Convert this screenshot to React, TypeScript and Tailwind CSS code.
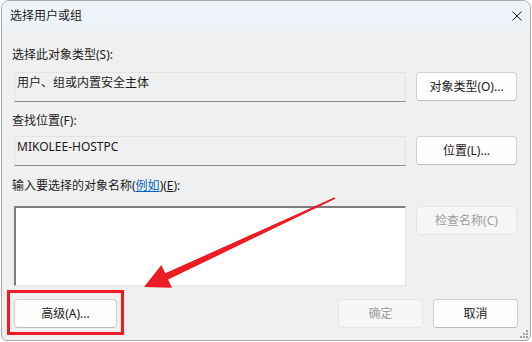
function Btn({
  label,
  disabled,
  className = "",
}: {
  label: React.ReactNode
  disabled?: boolean
  className?: string
}) {
  return (
    <div
      className={
        "flex h-[29px] shrink-0 items-center justify-center rounded-[4px] border leading-[16px] " +
        (disabled
          ? "border-[#e5e5e5] bg-[#f6f6f6] text-[#9d9d9d] "
          : "border-[#d0d0d0] border-b-[#bcbcbc] bg-[#fdfdfd] text-[#1b1b1b] ") +
        className
      }
    >
      {label}
    </div>
  )
}

function ReadBox({ text }: { text: string }) {
  return (
    <div className="ml-[2px] h-[30px] w-[392px] border border-[#e3e3e3] border-b-[#8a8a8a] bg-[#f0f0f0] pl-[2px] pt-[2px] leading-[16px]">
      {text}
    </div>
  )
}

export default function App() {
  return (
    <div className="relative h-[342px] w-[532px] bg-white font-['Noto_Sans','Noto_Sans_CJK_SC',sans-serif] text-[12px] text-[#1b1b1b]">
      <div className="ml-[1px] flex h-[341px] w-[530px] flex-col overflow-hidden rounded-t-[8px] rounded-b-[6px] border border-[#a8a8a8] bg-[#f0f0f0]">
        <div className="flex h-[29px] shrink-0 items-center justify-between bg-[#eef3f9] pl-[8px] pr-[8px]">
          <span className="leading-[16px]">选择用户或组</span>
          <svg width="10" height="10" viewBox="0 0 10 10">
            <path d="M0.5 0.5 L9.5 9.5 M9.5 0.5 L0.5 9.5" stroke="#1b1b1b" strokeWidth="1" />
          </svg>
        </div>

        <div className="flex flex-1 flex-col pl-[10px] pr-[12px]">
          <div className="mt-[17px] h-[16px] leading-[16px]">选择此对象类型(S):</div>
          <div className="mt-[9px] flex h-[30px]">
            <ReadBox text="用户、组或内置安全主体" />
            <Btn label="对象类型(O)..." className="ml-[10px] w-[101px]" />
          </div>

          <div className="mt-[11px] h-[16px] leading-[16px]">查找位置(F):</div>
          <div className="mt-[7px] flex h-[30px]">
            <ReadBox text="MIKOLEE-HOSTPC" />
            <Btn label="位置(L)..." className="ml-[10px] w-[101px]" />
          </div>

          <div className="mt-[12px] h-[16px] leading-[16px]">
            输入要选择的对象名称(<span className="text-[#0066cc] underline">例如</span>)(<span className="underline">E</span>):
          </div>
          <div className="mt-[12px] flex h-[80px] items-start">
            <div className="ml-[2px] h-[80px] w-[392px] border-t-2 border-l-2 border-r border-b border-t-[#7e7e7e] border-l-[#7e7e7e] border-r-[#e3e3e3] border-b-[#e3e3e3] bg-white" />
            <Btn label="检查名称(C)" disabled className="ml-[10px] w-[101px]" />
          </div>

          <div className="mt-[13px] flex h-[29px]">
            <Btn label="高级(A)..." className="ml-[2px] w-[103px]" />
            <Btn label="确定" disabled className="ml-auto w-[85px]" />
            <Btn label="取消" className="ml-[10px] w-[85px] border-[#c4c4c4] border-b-[#a8a8a8]" />
          </div>
        </div>
      </div>

      {/* size grip */}
      <svg className="absolute left-[517px] top-[329px]" width="12" height="11" viewBox="0 0 12 11">
        <rect x="9" y="1" width="2" height="2" fill="#a0a0a0" />
        <rect x="6" y="4" width="2" height="2" fill="#a0a0a0" />
        <rect x="9" y="4" width="2" height="2" fill="#a0a0a0" />
        <rect x="3" y="7" width="2" height="2" fill="#a0a0a0" />
        <rect x="6" y="7" width="2" height="2" fill="#a0a0a0" />
        <rect x="9" y="7" width="2" height="2" fill="#a0a0a0" />
      </svg>

      {/* annotation */}
      <div className="absolute left-[7px] top-[290px] h-[45px] w-[117px] border-[3px] border-[#ed1c24]" />
      <svg className="pointer-events-none absolute left-0 top-0" width="532" height="342" viewBox="0 0 532 342">
        <polygon
          points="335.4,198.7 168.1,279.6 171.9,287.8 144,287 161.4,265.1 165.2,273.3 334.6,197.3"
          fill="#ed1c24"
        />
      </svg>
    </div>
  )
}
